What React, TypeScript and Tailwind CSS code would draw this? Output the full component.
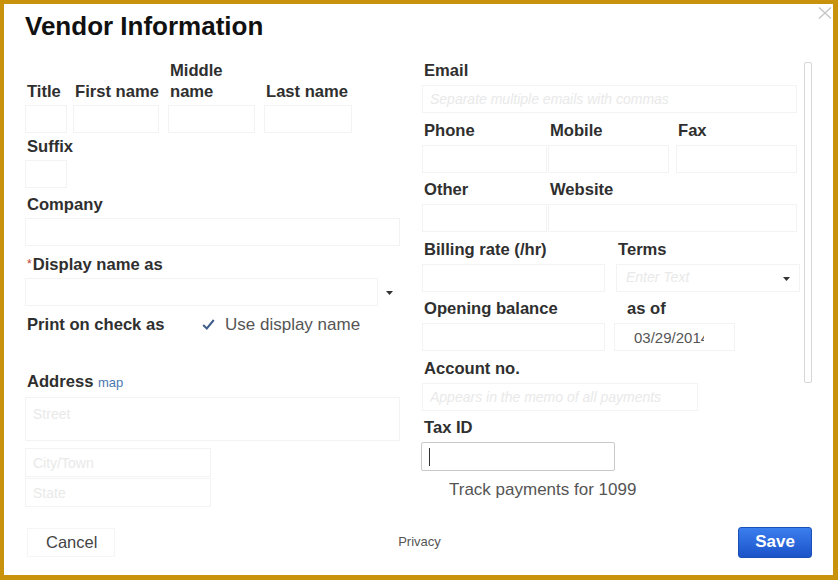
import { FC, ReactNode } from 'react';

const Label: FC<{ children: ReactNode; className?: string }> = ({ children, className = '' }) => (
  <div className={`pl-[2px] text-[16.6px] font-bold leading-[21px] text-[#2f2f2f] ${className}`}>{children}</div>
);

const inputCls =
  'block h-[28px] border border-[#f3f3f3] bg-white px-[7px] text-[14px] text-[#555] outline-none placeholder:text-[#e9e9e9]';

const Caret: FC = () => (
  <svg width="7" height="4" viewBox="0 0 7 4" className="block">
    <path d="M0 0 L7 0 L3.5 4 Z" fill="#333" />
  </svg>
);

const App: FC = () => {
  return (
    <div className="h-[580px] w-[838px] overflow-hidden border-t-4 border-r-[5px] border-b-[5px] border-l-4 border-[#c9920c] bg-white font-['Liberation_Sans',Arial,sans-serif]">
      {/* Header */}
      <div className="flex h-[56px] items-start justify-between pl-[21px]">
        <h1 className="pt-[7px] text-[26px] font-bold leading-[30px] text-[#111]">Vendor Information</h1>
        <svg width="14" height="12" viewBox="0 0 14 12" className="mt-[3px] mr-[1px]">
          <path d="M1 0.5 L13 11.5 M13 0.5 L1 11.5" stroke="#c4c4c4" strokeWidth="1.3" />
        </svg>
      </div>

      {/* Body */}
      <div className="flex h-[449px] overflow-hidden pl-[21px]">
        {/* Left column */}
        <div className="w-[375px] shrink-0">
          <div className="flex items-end">
            <div className="w-[42px]">
              <Label>Title</Label>
              <input className={`${inputCls} mt-[3px] w-[42px]`} />
            </div>
            <div className="ml-[6px] w-[86px]">
              <Label>First name</Label>
              <input className={`${inputCls} mt-[3px] w-[86px]`} />
            </div>
            <div className="ml-[9px] w-[87px]">
              <Label>
                Middle
                <br />
                name
              </Label>
              <input className={`${inputCls} mt-[3px] w-[87px]`} />
            </div>
            <div className="ml-[9px] w-[88px]">
              <Label>Last name</Label>
              <input className={`${inputCls} mt-[3px] w-[88px]`} />
            </div>
          </div>

          <div className="mt-[3px]">
            <Label>Suffix</Label>
            <input className={`${inputCls} mt-[3px] w-[42px]`} />
          </div>

          <div className="mt-[6px]">
            <Label>Company</Label>
            <input className={`${inputCls} mt-[3px] w-[375px]`} />
          </div>

          <div className="mt-[8px]">
            <Label>
              <span className="mr-[1px] align-top text-[12px] font-normal text-[#c0392b]">*</span>
              Display name as
            </Label>
            <div className="mt-[3px] flex items-center">
              <input className={`${inputCls} w-[353px]`} />
              <div className="flex w-[22px] justify-center pt-[2px]">
                <Caret />
              </div>
            </div>
          </div>

          <div className="mt-[8px] flex items-baseline">
            <Label className="w-[177px] shrink-0">Print on check as</Label>
            <svg width="13" height="11" viewBox="0 0 13 11" className="shrink-0">
              <path d="M1.2 6 L4.8 9.5 L11.8 1" fill="none" stroke="#3e5f8c" strokeWidth="2" />
            </svg>
            <span className="ml-[10px] text-[17px] leading-[21px] text-[#555]">Use display name</span>
          </div>

          <div className="mt-[36px]">
            <Label>
              Address <span className="text-[13px] font-normal text-[#4a78b0]">map</span>
            </Label>
            <textarea
              placeholder="Street"
              className="mt-[4px] block h-[44px] w-[375px] resize-none border border-[#f3f3f3] px-[7px] pt-[6px] text-[14px] text-[#555] outline-none placeholder:text-[#e9e9e9]"
            />
            <input placeholder="City/Town" className={`${inputCls} mt-[7px] h-[29px] w-[186px]`} />
            <input placeholder="State" className={`${inputCls} mt-[1px] h-[29px] w-[186px]`} />
          </div>
        </div>

        {/* Right column */}
        <div className="ml-[22px] flex">
          <div className="w-[379px]">
            <div>
              <Label className="pl-[1px]">Email</Label>
              <input
                placeholder="Separate multiple emails with commas"
                className={`${inputCls} mt-[4px] w-[375px] placeholder:italic`}
              />
            </div>

            <div className="mt-[6.5px] flex">
              <div className="w-[126px]">
                <Label className="pl-[1px]">Phone</Label>
                <input className={`${inputCls} mt-[4px] w-[125px]`} />
              </div>
              <div className="w-[128px]">
                <Label>Mobile</Label>
                <input className={`${inputCls} mt-[4px] w-[121px]`} />
              </div>
              <div className="w-[121px]">
                <Label className="pl-[1px]">Fax</Label>
                <input className={`${inputCls} mt-[4px] w-[121px]`} />
              </div>
            </div>

            <div className="mt-[6.5px] flex">
              <div className="w-[126px]">
                <Label className="pl-[1px]">Other</Label>
                <input className={`${inputCls} mt-[4px] w-[125px]`} />
              </div>
              <div className="w-[249px]">
                <Label>Website</Label>
                <input className={`${inputCls} mt-[4px] w-[249px]`} />
              </div>
            </div>

            <div className="mt-[6.5px] flex">
              <div className="w-[194px]">
                <Label className="pl-[1px]">Billing rate (/hr)</Label>
                <input className={`${inputCls} mt-[4px] w-[183px]`} />
              </div>
              <div className="w-[184px]">
                <Label className="pl-[1px]">Terms</Label>
                <div className="mt-[4px] flex h-[28px] w-[184px] items-center justify-between border border-[#f3f3f3] pr-[9px] pl-[9px]">
                  <span className="text-[14px] italic text-[#e9e9e9]">Enter Text</span>
                  <div className="pt-[2px]">
                    <Caret />
                  </div>
                </div>
              </div>
            </div>

            <div className="mt-[6.5px] flex">
              <div className="w-[192px]">
                <Label className="pl-[1px]">Opening balance</Label>
                <input className={`${inputCls} mt-[4px] w-[183px]`} />
              </div>
              <div className="w-[121px]">
                <Label className="pl-[13px]">as of</Label>
                <input
                  readOnly
                  value="03/29/2014"
                  className="mt-[4px] block h-[28px] w-[121px] border border-[#f3f3f3] pr-[30px] pl-[19px] text-[15px] text-[#555] outline-none"
                />
              </div>
            </div>

            <div className="mt-[6.5px]">
              <Label className="pl-[1px]">Account no.</Label>
              <input
                placeholder="Appears in the memo of all payments"
                className={`${inputCls} mt-[4px] w-[276px] placeholder:italic`}
              />
            </div>

            <div className="mt-[6.5px]">
              <Label className="pl-[1px]">Tax ID</Label>
              <div className="mt-[4px] -ml-px flex h-[29px] w-[194px] items-center rounded-[2px] border border-[#c9c9c9] pl-[7px]">
                <span className="block h-[18px] w-px bg-[#333]" />
              </div>
              <div className="mt-[8px] pl-[27px] text-[17px] leading-[21px] text-[#555]">Track payments for 1099</div>
            </div>
          </div>

          {/* scrollbar */}
          <div className="mt-[2px] ml-[3px] h-[321px] w-[8px] rounded-[2px] border border-[#d6d6d6]" />
        </div>
      </div>

      {/* Footer */}
      <div className="grid h-[66px] grid-cols-[1fr_auto_1fr] items-center pr-[21px] pl-[23px]">
        <div>
          <button className="h-[29px] w-[88px] border border-[#f5f5f5] pl-[18px] text-left text-[16.5px] text-[#444]">
            Cancel
          </button>
        </div>
        <span className="text-[13px] text-[#555]">Privacy</span>
        <div className="flex justify-end">
          <button className="h-[31px] w-[74px] rounded-[3px] border border-[#1b4fb8] bg-linear-to-b from-[#3b7eee] to-[#1c53c9] text-[17px] font-bold text-white">
            Save
          </button>
        </div>
      </div>
    </div>
  );
};

export default App;
